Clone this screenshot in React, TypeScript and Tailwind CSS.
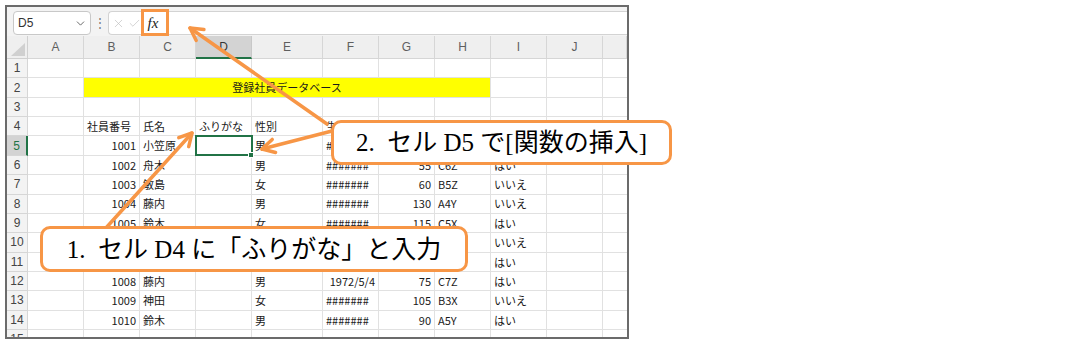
import React from 'react';
import { X, Check, ChevronDown } from 'lucide-react';

const ORANGE = '#F79646';

const colLetters = ['A', 'B', 'C', 'D', 'E', 'F', 'G', 'H', 'I', 'J', ''];

// values for columns B..I
const data: Record<number, string[]> = {
  4: ['社員番号', '氏名', 'ふりがな', '性別', '生年月日', '身長', 'コード', '回答'],
  5: ['1001', '小笠原', '', '男', '#######', '95', 'A1Y', 'はい'],
  6: ['1002', '舟木', '', '男', '#######', '55', 'C6Z', 'はい'],
  7: ['1003', '敏島', '', '女', '#######', '60', 'B5Z', 'いいえ'],
  8: ['1004', '藤内', '', '男', '#######', '130', 'A4Y', 'いいえ'],
  9: ['1005', '鈴木', '', '女', '#######', '115', 'C5X', 'はい'],
  10: ['1006', '山本', '', '女', '#######', '80', 'A2X', 'いいえ'],
  11: ['1007', '田中', '', '男', '#######', '70', 'B1Y', 'はい'],
  12: ['1008', '藤内', '', '男', '1972/5/4', '75', 'C7Z', 'はい'],
  13: ['1009', '神田', '', '女', '#######', '105', 'B3X', 'いいえ'],
  14: ['1010', '鈴木', '', '男', '#######', '90', 'A5Y', 'はい'],
};

const cellFont = { fontFamily: "'Noto Sans CJK JP', 'Liberation Sans', sans-serif" };

function Cell({ v, col, row }: { v: string; col: number; row: number }) {
  // col: 1 = B ... 8 = I
  let align = 'justify-start pl-[3px]';
  if (row !== 4) {
    if (col === 1 || col === 6) align = 'justify-end pr-[3px]';
    if (col === 5) align = v.startsWith('#') ? 'justify-start pl-[3px]' : 'justify-end pr-[3px]';
  }
  return (
    <div
      className={`flex items-center overflow-hidden whitespace-nowrap border-r border-b border-[#e1e1e1] text-[11px] text-[#1a1a1a] ${align}`}
      style={cellFont}
    >
      {v}
    </div>
  );
}

function Arrow({ x1, y1, x2, y2 }: { x1: number; y1: number; x2: number; y2: number }) {
  const a = Math.atan2(y2 - y1, x2 - x1);
  const L = 14;
  const s = 0.5;
  const p1 = `${x2 - L * Math.cos(a - s)},${y2 - L * Math.sin(a - s)}`;
  const p2 = `${x2 - L * Math.cos(a + s)},${y2 - L * Math.sin(a + s)}`;
  return (
    <g stroke={ORANGE} strokeWidth={3.5} strokeLinecap="round" strokeLinejoin="round" fill="none">
      <line x1={x1} y1={y1} x2={x2} y2={y2} />
      <polyline points={`${p1} ${x2},${y2} ${p2}`} />
    </g>
  );
}

export default function App() {
  const rows = Array.from({ length: 15 }, (_, i) => i + 1);
  return (
    <div className="relative w-[1078px] h-[344px] overflow-hidden bg-white pl-[5px] pt-[5px]">
      {/* Excel frame */}
      <div className="flex h-[334px] w-[624px] flex-col overflow-hidden border-2 border-[#6b6b6b] bg-white">
        {/* formula bar */}
        <div className="flex h-[29px] shrink-0 items-start bg-[#f3f3f3] pl-[6px] pt-[4px]">
          <div
            className="flex h-[24px] w-[78px] items-center justify-between rounded-[4px] border border-[#c8c8c8] bg-white pl-[4px] pr-[3px] text-[12px] text-[#333]"
            style={{ fontFamily: "'Liberation Sans', sans-serif" }}
          >
            <span>D5</span>
            <ChevronDown size={13} strokeWidth={1.6} color="#555" />
          </div>
          <div className="flex h-[24px] w-[17px] items-center justify-center text-[12px] text-[#777]">⋮</div>
          <div className="flex h-[24px] flex-1 items-center rounded-l-[4px] border border-r-0 border-[#d3d3d3] bg-white pl-[3px]">
            <X size={13} strokeWidth={1.2} color="#bdbdbd" />
            <Check size={13} strokeWidth={1.2} color="#bdbdbd" className="ml-[3px]" />
            <div
              className="ml-[1px] flex w-[22px] items-center justify-center text-[15px] italic text-[#222]"
              style={{ fontFamily: "'Liberation Serif', serif" }}
            >
              fx
            </div>
          </div>
        </div>

        {/* sheet grid */}
        <div className="grid flex-1 grid-cols-[21px_56px_56px_56px_56px_71px_56px_56px_56px_56px_56px_1fr] grid-rows-[23px] auto-rows-[19.36px] overflow-hidden">
          {/* corner */}
          <div className="relative border-r border-b border-[#d0d0d0] bg-[#efefef]">
            <svg className="absolute bottom-[2px] right-[2px]" width="14" height="13" viewBox="0 0 14 13">
              <polygon points="14,0 14,13 0,13" fill="#d0d0d0" />
            </svg>
          </div>
          {colLetters.map((c, i) => (
            <div
              key={c + i}
              className={`flex items-center justify-center text-[12px] ${
                c === 'D'
                  ? 'border-r border-[#c8c8c8] border-b-2 border-b-[#217346] bg-[#d3d3d3] text-[#333]'
                  : 'border-r border-b border-[#d6d6d6] bg-[#efefef] text-[#5f5f5f]'
              }`}
              style={{ fontFamily: "'Liberation Sans', sans-serif" }}
            >
              {c}
            </div>
          ))}

          {rows.map((r) => {
            const vals = data[r];
            const header = (
              <div
                key={`h${r}`}
                className={`flex items-center justify-center text-[12px] ${
                  r === 5
                    ? 'border-r-2 border-r-[#217346] border-b border-b-[#d6d6d6] bg-[#d3d3d3] text-[#217346]'
                    : 'border-r border-b border-[#d6d6d6] bg-[#f3f3f3] text-[#444]'
                }`}
                style={{ fontFamily: "'Liberation Sans', sans-serif" }}
              >
                {r}
              </div>
            );
            const cells: React.ReactNode[] = [header];
            // column A
            cells.push(<div key={`a${r}`} className="border-r border-b border-[#e1e1e1]" />);
            if (r === 2) {
              cells.push(
                <div
                  key="title"
                  className="col-span-7 flex items-center justify-center border-r border-b border-[#e1e1e1] bg-[#ffff00] text-[11px] text-[#1a1a1a]"
                  style={cellFont}
                >
                  登録社員データベース
                </div>
              );
              cells.push(<div key="i2" className="border-r border-b border-[#e1e1e1]" />);
            } else if (vals) {
              vals.forEach((v, i) => {
                if (r === 5 && i === 2) {
                  cells.push(
                    <div key={`c${r}-${i}`} className="relative border-r border-b border-[#e1e1e1]">
                      <div className="absolute -left-[1px] -top-[1px] h-[21px] w-[58px] border-2 border-[#217346]" />
                      <div className="absolute -bottom-[3px] -right-[3px] h-[6px] w-[6px] border border-white bg-[#217346]" />
                    </div>
                  );
                } else {
                  cells.push(<Cell key={`c${r}-${i}`} v={v} col={i + 1} row={r} />);
                }
              });
            } else {
              for (let i = 0; i < 8; i++) {
                cells.push(<div key={`e${r}-${i}`} className="border-r border-b border-[#e1e1e1]" />);
              }
            }
            // J and K
            cells.push(<div key={`j${r}`} className="border-r border-b border-[#e1e1e1]" />);
            cells.push(<div key={`k${r}`} className="border-b border-[#e1e1e1]" />);
            return <React.Fragment key={r}>{cells}</React.Fragment>;
          })}
        </div>
      </div>

      {/* annotations */}
      <div className="absolute left-[141px] top-[9px] h-[27px] w-[28px] border-[3px] border-[#F79646]" />

      <svg className="pointer-events-none absolute left-0 top-0" width="1078" height="344">
        <Arrow x1={105} y1={229} x2={192} y2={133} />
        <Arrow x1={332} y1={131} x2={262} y2={149} />
        <Arrow x1={327} y1={124} x2={190} y2={28} />
      </svg>

      <div
        className="absolute left-[331px] top-[120px] flex h-[45px] w-[341px] items-center justify-center whitespace-pre rounded-[10px] border-[3px] border-[#F79646] bg-white text-[25px] leading-none text-black"
        style={{ fontFamily: "'Liberation Serif', 'Noto Sans CJK JP', serif" }}
      >
        {'2.  セル D5 で[関数の挿入]'}
      </div>

      <div
        className="absolute left-[40px] top-[226px] flex h-[46px] w-[428px] items-center justify-center whitespace-pre rounded-[10px] border-[3px] border-[#F79646] bg-white text-[25px] leading-none text-black"
        style={{ fontFamily: "'Liberation Serif', 'Noto Sans CJK JP', serif" }}
      >
        {'1.  セル D4 に「ふりがな」と入力'}
      </div>
    </div>
  );
}
